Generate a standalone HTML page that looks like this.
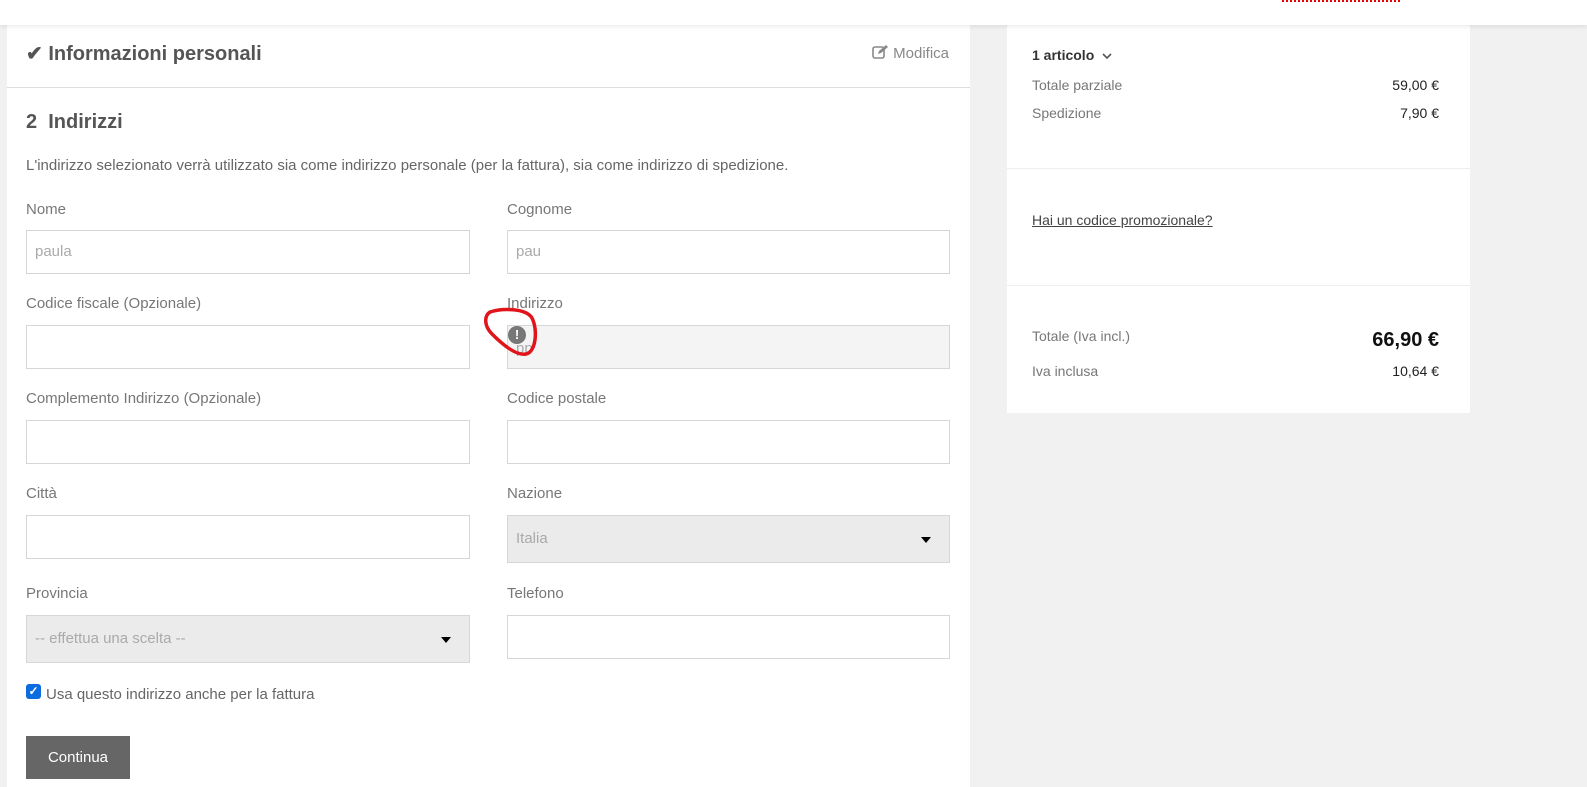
<!DOCTYPE html>
<html><head><meta charset="utf-8"><style>
*{box-sizing:border-box;margin:0;padding:0}
body{width:1587px;height:787px;overflow:hidden;background:#f1f1f1;font-family:"Liberation Sans",Arial,sans-serif;position:relative;color:#777}
.a{position:absolute}
.hdr{left:0;top:0;width:1587px;height:25px;background:#fff;box-shadow:0 2px 4px rgba(0,0,0,.08);z-index:2}
.left{left:7px;top:25px;width:963px;height:762px;background:#fff}
.right{left:1007px;top:25px;width:463px;height:388px;background:#fff}
.lbl{font-size:15px;color:#777}
.inp{height:44px;border:1px solid #d6d6d6;background:#fff;font-size:15px;color:#aaa;padding:0 8px;line-height:42px}
.sel{height:48px;border:1px solid #d6d6d6;background:#ebebeb;font-size:15px;color:#aaa;padding:0 8px;line-height:46px}
.sel:after{content:"";position:absolute;right:18px;top:21px;border-left:5px solid transparent;border-right:5px solid transparent;border-top:6px solid #000}
.c1{left:26px;width:444px}.c2{left:507px;width:443px}
.r{font-size:14px;color:#777}
.v{font-size:14px;color:#222;text-align:right;right:148px}
</style></head><body>
<div class="a hdr"></div>
<div class="a" style="left:1282px;top:0;width:118px;border-top:2px dotted #e00;z-index:3"></div>
<div class="a left"></div>
<div class="a" style="left:7px;top:87px;width:963px;height:1px;background:#ddd"></div>
<div class="a" style="left:26px;top:41px;font-size:20px;font-weight:bold;color:#555">✔ Informazioni personali</div>
<div class="a" style="left:872px;top:44px;font-size:15px;color:#888"><svg width="17" height="16" viewBox="0 0 17 16" style="vertical-align:-2px"><rect x="1" y="3" width="11" height="11" rx="2" fill="none" stroke="#888" stroke-width="1.6"/><path d="M6 10 L7 7 L14 1 L16 3 L9 9 Z" fill="#888"/></svg> Modifica</div>
<div class="a" style="left:26px;top:111px;font-size:20px;font-weight:bold;color:#555">2&nbsp; Indirizzi</div>
<div class="a" style="left:26px;top:157px;font-size:15px;color:#666">L'indirizzo selezionato verrà utilizzato sia come indirizzo personale (per la fattura), sia come indirizzo di spedizione.</div>

<div class="a lbl" style="left:26px;top:201px">Nome</div>
<div class="a lbl" style="left:507px;top:201px">Cognome</div>
<div class="a inp c1" style="top:230px">paula</div>
<div class="a inp c2" style="top:230px">pau</div>

<div class="a lbl" style="left:26px;top:295px">Codice fiscale (Opzionale)</div>
<div class="a lbl" style="left:507px;top:295px">Indirizzo</div>
<div class="a inp c1" style="top:325px"></div>
<div class="a inp c2" style="top:325px;background:#f4f4f4;line-height:46px">pp</div>
<div class="a" style="left:508px;top:326px;width:18px;height:18px;border-radius:50%;background:#777;color:#fff;font-size:13px;font-weight:bold;text-align:center;line-height:18px">!</div>
<svg class="a" style="left:480px;top:306px" width="60" height="52" viewBox="0 0 60 52"><path d="M10 6 C22 2 46 2 52 12 C58 24 56 46 46 48 C36 50 22 38 12 28 C4 20 4 10 10 6 Z" fill="none" stroke="#e0141b" stroke-width="3.5"/></svg>

<div class="a lbl" style="left:26px;top:390px">Complemento Indirizzo (Opzionale)</div>
<div class="a lbl" style="left:507px;top:390px">Codice postale</div>
<div class="a inp c1" style="top:420px"></div>
<div class="a inp c2" style="top:420px"></div>

<div class="a lbl" style="left:26px;top:485px">Città</div>
<div class="a lbl" style="left:507px;top:485px">Nazione</div>
<div class="a inp c1" style="top:515px"></div>
<div class="a sel c2" style="top:515px">Italia</div>

<div class="a lbl" style="left:26px;top:585px">Provincia</div>
<div class="a lbl" style="left:507px;top:585px">Telefono</div>
<div class="a sel c1" style="top:615px">-- effettua una scelta --</div>
<div class="a inp c2" style="top:615px"></div>

<div class="a" style="left:26px;top:684px;width:15px;height:15px;border-radius:3px;background:#0a6cde;color:#fff;font-size:12px;line-height:15px;text-align:center;font-weight:bold">✓</div>
<div class="a" style="left:46px;top:686px;font-size:15px;color:#666">Usa questo indirizzo anche per la fattura</div>
<div class="a" style="left:26px;top:736px;width:104px;height:43px;background:#666;color:#fff;font-size:15px;text-align:center;line-height:43px">Continua</div>

<div class="a right"></div>
<div class="a" style="left:1032px;top:47px;font-size:14px;font-weight:bold;color:#333">1 articolo &nbsp;<svg width="10" height="8" viewBox="0 0 10 8"><path d="M1 2 L5 6 L9 2" fill="none" stroke="#555" stroke-width="1.6"/></svg></div>
<div class="a r" style="left:1032px;top:77px">Totale parziale</div>
<div class="a v" style="top:77px">59,00 €</div>
<div class="a r" style="left:1032px;top:105px">Spedizione</div>
<div class="a v" style="top:105px">7,90 €</div>
<div class="a" style="left:1007px;top:168px;width:463px;height:1px;background:#eee"></div>
<div class="a" style="left:1032px;top:212px;font-size:14px;color:#444;text-decoration:underline">Hai un codice promozionale?</div>
<div class="a" style="left:1007px;top:285px;width:463px;height:1px;background:#eee"></div>
<div class="a r" style="left:1032px;top:328px">Totale (Iva incl.)</div>
<div class="a" style="right:148px;top:329px;font-size:20px;font-weight:bold;color:#111">66,90 €</div>
<div class="a r" style="left:1032px;top:363px">Iva inclusa</div>
<div class="a v" style="top:363px">10,64 €</div>
</body></html>
